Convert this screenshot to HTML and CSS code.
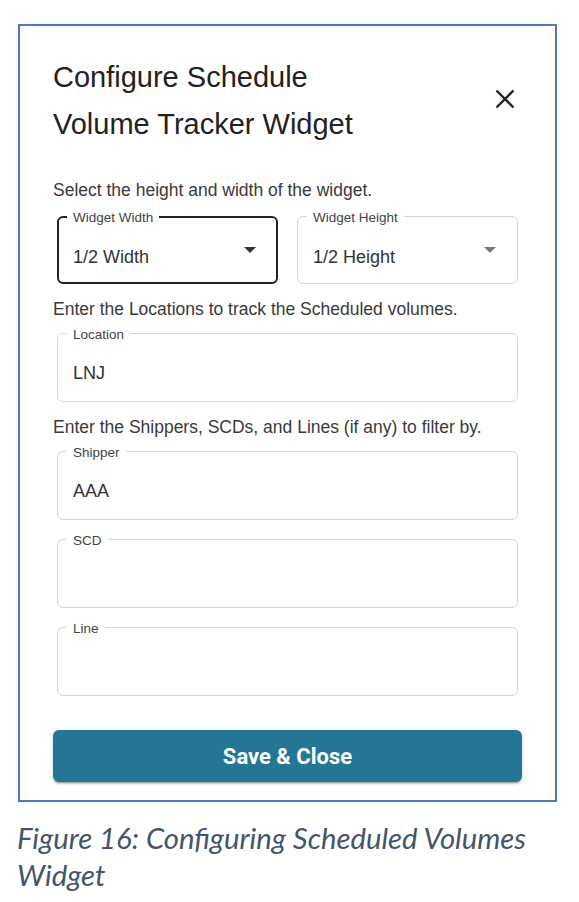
FILE: index.html
```html
<!DOCTYPE html>
<html lang="en">
<head>
<meta charset="utf-8">
<title>Configure Schedule Volume Tracker Widget</title>
<link rel="stylesheet" href="styles.css">
</head>
<body>
<div class="frame">
  <div class="dialog-head">
    <h1 class="dialog-title">Configure Schedule<br>Volume Tracker Widget</h1>
    <button class="close-btn" aria-label="Close">
      <svg width="20" height="20" viewBox="0 0 20 20"><path d="M1.5 1.5 L18.5 18.5 M18.5 1.5 L1.5 18.5" stroke="#222" stroke-width="2.4" fill="none"/></svg>
    </button>
  </div>

  <p class="hint hint-first">Select the height and width of the widget.</p>
  <div class="row">
    <fieldset class="field select focused">
      <legend>Widget Width</legend>
      <div class="value-line"><span class="value">1/2 Width</span>
        <svg class="arrow" width="12" height="6" viewBox="0 0 12 6"><path d="M0 0 L12 0 L6 6 Z" fill="#333"/></svg>
      </div>
    </fieldset>
    <fieldset class="field select">
      <legend>Widget Height</legend>
      <div class="value-line"><span class="value">1/2 Height</span>
        <svg class="arrow" width="12" height="6" viewBox="0 0 12 6"><path d="M0 0 L12 0 L6 6 Z" fill="#7a7a7a"/></svg>
      </div>
    </fieldset>
  </div>

  <p class="hint">Enter the Locations to track the Scheduled volumes.</p>
  <fieldset class="field text">
    <legend>Location</legend>
    <div class="value-line"><span class="value">LNJ</span></div>
  </fieldset>

  <p class="hint">Enter the Shippers, SCDs, and Lines (if any) to filter by.</p>
  <fieldset class="field text">
    <legend>Shipper</legend>
    <div class="value-line"><span class="value">AAA</span></div>
  </fieldset>
  <fieldset class="field text stacked">
    <legend>SCD</legend>
    <div class="value-line"></div>
  </fieldset>
  <fieldset class="field text stacked">
    <legend>Line</legend>
    <div class="value-line"></div>
  </fieldset>

  <button class="save-btn">Save &amp; Close</button>
</div>
<p class="caption">Figure 16: Configuring Scheduled Volumes<br>Widget</p>
</body>
</html>
```

FILE: styles.css
```css
* { box-sizing: border-box; }

html, body {
  margin: 0;
  padding: 0;
  background: #ffffff;
}

body {
  font-family: "Liberation Sans", Arial, sans-serif;
  color: #333;
}

.frame {
  margin: 24px 0 0 18px;
  width: 539px;
  border: 2px solid #4a78cd;
  padding: 28px 33px 18px 33px;
}

.dialog-head {
  display: flex;
  align-items: center;
  justify-content: space-between;
}

.dialog-title {
  margin: 0;
  font-weight: 400;
  font-size: 29px;
  line-height: 47px;
  color: #222;
}

.close-btn {
  border: 0;
  background: none;
  padding: 0;
  margin: 0 7px 5px 0;
  width: 20px;
  height: 20px;
  display: flex;
}

.hint {
  margin: 15px 0 0 0;
  font-size: 17.5px;
  line-height: 20px;
  color: #3a3a3a;
}

.hint-first {
  margin-top: 32px;
}

.row {
  display: flex;
  gap: 19px;
  margin: 7px 4px 0 4px;
}

.row .field {
  flex: 1;
  margin: 0;
}

.field {
  margin: 5px 4px 0 4px;
  min-width: 0;
  border: 1px solid #d6d6d6;
  border-radius: 6px;
  padding: 18px 10px 16px 9px;
}

.field.stacked {
  margin-top: 10px;
}

.field legend {
  padding: 3px 6px 0 6px;
  font-size: 13.5px;
  line-height: 16px;
  color: #444;
}

.field.select {
  padding-top: 19px;
  padding-bottom: 14px;
}

.field.focused {
  border: 2px solid #222;
  padding: 19px 9px 13px 8px;
}

.value-line {
  display: flex;
  align-items: center;
  justify-content: space-between;
  height: 24px;
  padding-left: 6px;
}

.value {
  font-size: 18px;
  line-height: 24px;
  color: #333;
}

.arrow {
  margin: -14px 11px 0 0;
}

.save-btn {
  display: block;
  width: 100%;
  height: 52px;
  margin-top: 34px;
  border: 0;
  border-radius: 6px;
  background: #257694;
  color: #ffffff;
  font-family: Roboto, "Liberation Sans", sans-serif;
  font-weight: 700;
  font-size: 22px;
  box-shadow: 0 3px 1px -2px rgba(0,0,0,0.2), 0 2px 2px 0 rgba(0,0,0,0.14), 0 1px 5px 0 rgba(0,0,0,0.12);
}

.caption {
  margin: 17px 0 0 17px;
  font-family: Lato, "Open Sans", sans-serif;
  font-style: italic;
  font-size: 29.3px;
  line-height: 37px;
  color: #44546a;
}
```
